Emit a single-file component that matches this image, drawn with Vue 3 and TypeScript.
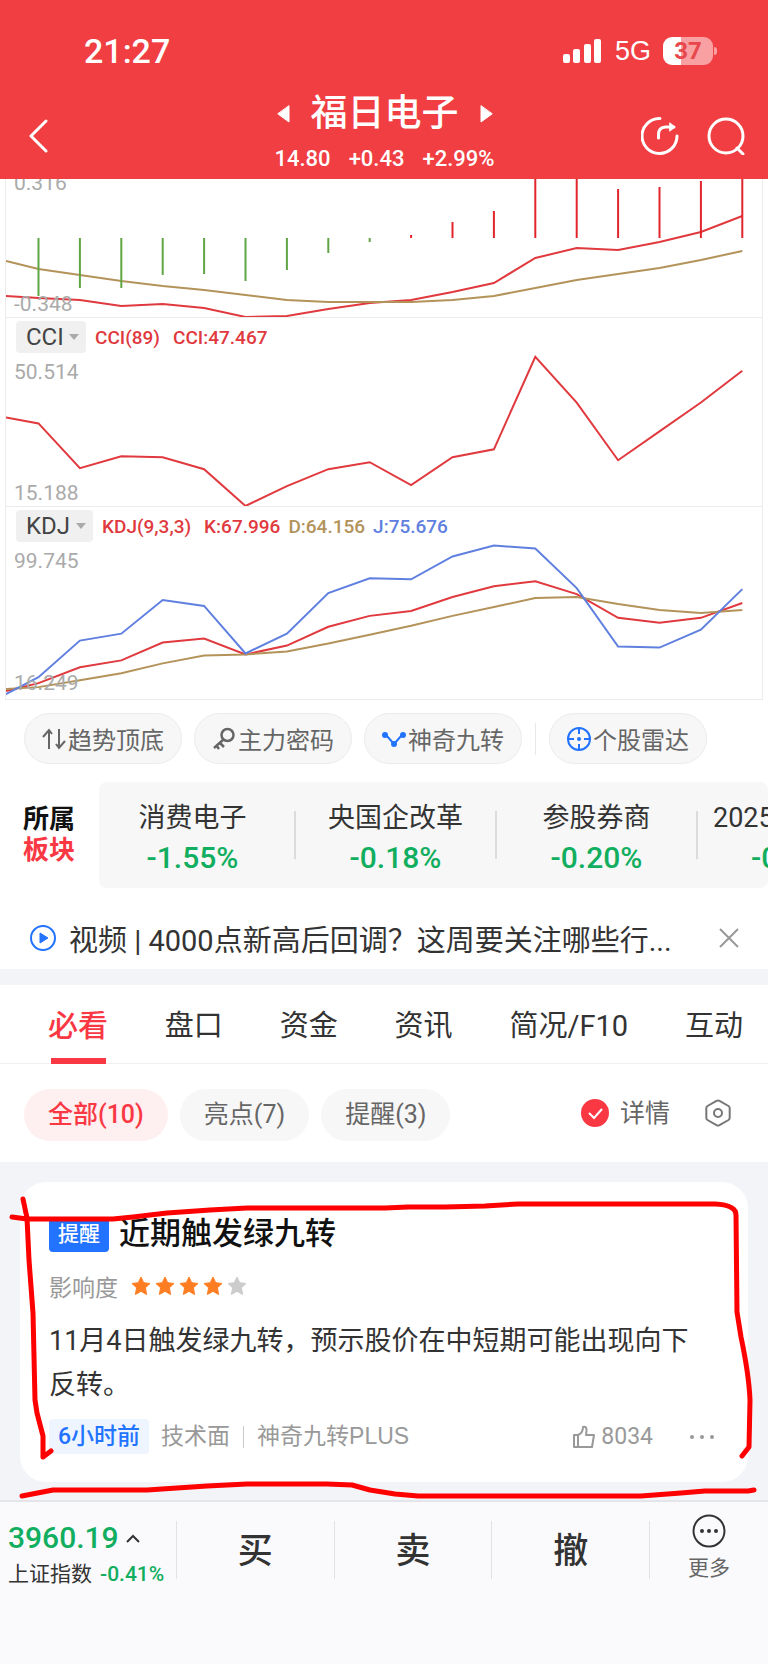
<script setup lang="ts">
import { ref } from 'vue'

type Series = { color: string; ys: number[] }
type Legend = { text: string; color: string }
type Panel = {
  id: string
  top: number
  height: number
  max: string
  min: string
  legends: Legend[]
  series: Series[]
}

const RED = '#e0393e'
const TAN = '#b3935a'
const BLUE = '#6080e0'

const panels: Panel[] = [
  {
    id: 'MACD', top: 179, height: 138, max: '0.316', min: '-0.348', legends: [],
    series: [
      { color: RED, ys: [296, 298, 300, 306, 304, 308, 317, 316, 309, 303, 300, 292, 283, 258, 248, 250, 242, 232, 216] },
      { color: TAN, ys: [261, 269, 275, 281, 286, 290, 295, 300, 302, 302, 302, 300, 296, 288, 280, 274, 268, 260, 251] },
    ],
  },
  {
    id: 'CCI', top: 317, height: 189, max: '50.514', min: '15.188',
    legends: [{ text: 'CCI(89)', color: RED }, { text: 'CCI:47.467', color: RED }],
    series: [
      { color: RED, ys: [417, 423, 468, 456, 457, 469, 506, 486, 469, 462, 485, 457, 449, 356, 402, 460, 431, 402, 370] },
    ],
  },
  {
    id: 'KDJ', top: 506, height: 194, max: '99.745', min: '16.249',
    legends: [
      { text: 'KDJ(9,3,3)', color: RED },
      { text: 'K:67.996', color: RED },
      { text: 'D:64.156', color: TAN },
      { text: 'J:75.676', color: BLUE },
    ],
    series: [
      { color: RED, ys: [692, 684, 668, 661, 643, 639, 655, 646, 627, 616, 611, 597, 586, 581, 594, 618, 623, 618, 603] },
      { color: TAN, ys: [690, 688, 681, 674, 664, 656, 655, 652, 644, 635, 626, 616, 607, 598, 597, 604, 610, 613, 610] },
      { color: BLUE, ys: [695, 678, 641, 634, 600, 606, 654, 634, 593, 578, 579, 556, 545, 548, 588, 647, 648, 630, 589] },
    ],
  },
]

const BASE = 238
const bars = [296, 288, 288, 275, 274, 281, 270, 253, 242, 235, 222, 211, 179, 179, 189, 187, 181, 179]

const xAt = (i: number): number => (i === 0 ? 0 : 32.5 + 41.4 * (i - 1))
const toPoints = (ys: number[]): string => ys.map((y, i) => `${xAt(i)},${y}`).join(' ')

const sectors = [
  { name: '消费电子', change: '-1.55%' },
  { name: '央国企改革', change: '-0.18%' },
  { name: '参股券商', change: '-0.20%' },
  { name: '2025', change: '-0' },
]

const tabs = ['必看', '盘口', '资金', '资讯', '简况/F10', '互动']
const activeTab = ref('必看')
const filters = ['全部(10)', '亮点(7)', '提醒(3)']
const activeFilter = ref('全部(10)')
const detail = ref(true)
</script>

<template>
  <div class="app">
    <header class="header">
      <div class="status">
        <span class="clock">21:27</span>
        <div class="status-right">
          <svg class="signal" viewBox="0 0 38 24" aria-hidden="true">
            <rect x="0" y="15" width="7" height="9" rx="2" />
            <rect x="10" y="10" width="7" height="14" rx="2" />
            <rect x="21" y="5" width="7" height="19" rx="2" />
            <rect x="31" y="0" width="7" height="24" rx="2" />
          </svg>
          <span class="net">5G</span>
          <span class="battery"><span class="battery-body">37</span><i class="nub"></i></span>
        </div>
      </div>
      <nav class="nav">
        <button class="icon-btn" aria-label="返回">
          <svg width="20" height="34" viewBox="0 0 20 34"><path d="M18 2 3 17l15 15" /></svg>
        </button>
        <div class="title-block">
          <div class="title-row">
            <button class="icon-btn" aria-label="上一只">
              <svg class="solid" width="14" height="18" viewBox="0 0 14 18"><path d="M12 1v16L1 9z" /></svg>
            </button>
            <h1>福日电子</h1>
            <button class="icon-btn" aria-label="下一只">
              <svg class="solid" width="14" height="18" viewBox="0 0 14 18"><path d="M2 1v16l11-8z" /></svg>
            </button>
          </div>
          <div class="quote"><span>14.80</span><span>+0.43</span><span>+2.99%</span></div>
        </div>
        <div class="nav-right">
          <button class="icon-btn" aria-label="分享">
            <svg width="38" height="38" viewBox="0 0 38 38">
              <path d="M19 1.500A17.500 17.500 0 1 0 36 19M17.500 21v-3.500q0-7 7-7.500H33" /><path d="m29 6 5 4-5 4z" fill="#fff" stroke-width="1" />
            </svg>
          </button>
          <button class="icon-btn" aria-label="搜索">
            <svg width="38" height="38" viewBox="0 0 38 38"><circle cx="19" cy="19" r="17" /><path d="m30 31 6 6" /></svg>
          </button>
        </div>
      </nav>
    </header>

    <main>
      <section class="charts">
        <div v-for="p in panels" :key="p.id" class="panel" :class="'panel-' + p.id.toLowerCase()">
          <svg class="plot" :viewBox="`0 ${p.top} 756 ${p.height}`" preserveAspectRatio="none" aria-hidden="true">
            <polyline v-for="(s, i) in p.series" :key="i" :points="toPoints(s.ys)" :stroke="s.color" />
            <template v-if="p.id === 'MACD'">
              <line
                v-for="(y, i) in bars" :key="'b' + i"
                :x1="xAt(i + 1)" :x2="xAt(i + 1)" :y1="BASE" :y2="y"
                :stroke="y > BASE ? '#5fa544' : '#e0252c'"
              />
            </template>
          </svg>
          <div class="overlay">
            <div v-if="p.legends.length" class="legend">
              <span class="picker">
                <select :aria-label="'指标 ' + p.id"><option>{{ p.id }}</option></select>
                <svg width="10" height="6" viewBox="0 0 10 6" aria-hidden="true"><path d="M0 0h10L5 6z" /></svg>
              </span>
              <span v-for="l in p.legends" :key="l.text" class="legend-item" :style="{ color: l.color }">{{ l.text }}</span>
            </div>
            <span class="scale">{{ p.max }}</span>
            <span class="scale low">{{ p.min }}</span>
          </div>
        </div>
      </section>

      <section class="tools">
        <button class="tool">
          <svg width="24" height="24" viewBox="0 0 24 24" fill="none" stroke="#666" stroke-width="2">
            <path d="M7 22V4M1 10l6-7 3 4M17 2v18M23 14l-6 7-3-4" />
          </svg>趋势顶底
        </button>
        <button class="tool">
          <svg width="24" height="24" viewBox="0 0 24 24" fill="none" stroke="#666" stroke-width="2.500">
            <circle cx="15.500" cy="8" r="6" /><path d="M11.500 12.500 2 21M8 16l4 4M4 18l3 4" />
          </svg>主力密码
        </button>
        <button class="tool">
          <svg width="24" height="24" viewBox="0 0 24 24" fill="#2273ff" stroke="#2273ff" stroke-width="2">
            <path d="m4 8 8 9 8-9" fill="none" /><circle cx="3" cy="8" r="2" /><circle cx="12" cy="17" r="2" /><circle cx="21" cy="8" r="2" />
          </svg>神奇九转
        </button>
        <i class="tool-sep"></i>
        <button class="tool">
          <svg width="24" height="24" viewBox="0 0 24 24" fill="none" stroke="#2273ff" stroke-width="2">
            <circle cx="12" cy="12" r="11" /><path d="M12 1v6M12 17v6M1 12h6M17 12h6" /><circle cx="12" cy="12" r="1" fill="#2273ff" />
          </svg>个股雷达
        </button>
      </section>

      <section class="sectors">
        <h2>所属<br /><em>板块</em></h2>
        <div class="sector-list">
          <a v-for="s in sectors" :key="s.name" href="#" class="sector">
            <span class="sector-name">{{ s.name }}</span>
            <span class="sector-change">{{ s.change }}</span>
          </a>
        </div>
      </section>

      <section class="video">
        <svg width="28" height="28" viewBox="0 0 28 28" aria-hidden="true">
          <circle cx="14" cy="14" r="12" fill="none" stroke="#2273ff" stroke-width="2" /><path d="M11 9v10l8-5z" fill="#2273ff" stroke="#2273ff" />
        </svg>
        <a href="#">视频 | 4000点新高后回调？这周要关注哪些行...</a>
        <button class="icon-btn" aria-label="关闭">
          <svg class="close" width="20" height="20" viewBox="0 0 20 20"><path d="m1 1 18 18M19 1 1 19" /></svg>
        </button>
      </section>

      <nav class="tabs">
        <button v-for="t in tabs" :key="t" class="tab" :class="{ active: t === activeTab }" @click="activeTab = t">{{ t }}</button>
      </nav>

      <section class="filters">
        <button
          v-for="f in filters" :key="f" class="filter" :class="{ active: f === activeFilter }"
          @click="activeFilter = f"
        >{{ f }}</button>
        <label class="detail">
          <span class="check">
            <input v-model="detail" type="checkbox" />
            <svg width="28" height="28" viewBox="0 0 28 28" aria-hidden="true"><path d="m8 14 5 5 8-9" /></svg>
          </span>
          详情
        </label>
        <button class="icon-btn" aria-label="设置">
          <svg class="gear" width="28" height="28" viewBox="0 0 28 28">
            <path d="M12.500 1.800q1.500-.8 3 0l9 5.200q1.200.8 1.200 2.200v9.600q0 1.400-1.200 2.200l-9 5.200q-1.500.8-3 0l-9-5.200q-1.200-.8-1.200-2.200V9.200q0-1.400 1.200-2.200z" /><circle cx="14" cy="14" r="4" />
          </svg>
        </button>
      </section>

      <section class="feed">
        <article class="card">
          <div class="card-title"><span class="badge">提醒</span><h3>近期触发绿九转</h3></div>
          <div class="impact">
            <span>影响度</span>
            <div class="stars">
              <svg v-for="n in 5" :key="n" :class="{ off: n === 5 }" width="20" height="20" viewBox="0 0 20 20" aria-hidden="true">
                <path d="m10 1 2.700 5.700 6.300.8-4.600 4.300 1.200 6.700L10 15.300l-5.600 3.200 1.200-6.700L1 7.500l6.300-.8z" />
              </svg>
            </div>
          </div>
          <p>11月4日触发绿九转，预示股价在中短期可能出现向下反转。</p>
          <footer class="meta">
            <span class="time">6小时前</span>
            <span>技术面</span>
            <i class="meta-sep"></i>
            <span class="source">神奇九转PLUS</span>
            <button class="like">
              <svg width="22" height="24" viewBox="0 0 22 24" aria-hidden="true">
                <path d="M1 10h4v12H1zM5 10q5-2 5-8 4-1 3.500 4l-.5 4h8l-2 12H5" />
              </svg>8034
            </button>
            <button class="icon-btn" aria-label="更多操作">
              <svg class="dots" width="26" height="6" viewBox="0 0 26 6"><circle cx="3" cy="3" r="2" /><circle cx="13" cy="3" r="2" /><circle cx="23" cy="3" r="2" /></svg>
            </button>
          </footer>
        </article>
        <svg class="marks" viewBox="0 1162 768 338" preserveAspectRatio="none" aria-hidden="true">
          <path d="M12 1217 27 1219H113L133 1217 167 1213 210 1210 247 1208H385L408 1207H445L485 1206 518 1204H715Q736 1205 736 1215L737 1312 741 1337Q749 1375 750 1400L749 1447 742 1456" />
          <path d="M23 1199 27 1218 29 1260 33 1313 35 1400 37 1413 43 1436V1457L51 1451" />
          <path d="M22 1496 53 1490H147L177 1488 207 1486 247 1484H327L352 1485 370 1490 395 1494 418 1496H641L681 1493 705 1491H748L754 1490" />
        </svg>
      </section>
    </main>

    <footer class="bottom">
      <button class="index">
        <span class="index-value">3960.19
          <svg width="14" height="9" viewBox="0 0 14 9" aria-hidden="true"><path d="m1 8 6-6 6 6" /></svg>
        </span>
        <span class="index-name">上证指数<b>-0.41%</b></span>
      </button>
      <button class="trade">买</button>
      <button class="trade">卖</button>
      <button class="trade">撤</button>
      <button class="more">
        <svg width="34" height="34" viewBox="0 0 34 34" aria-hidden="true">
          <circle cx="17" cy="17" r="15.500" fill="none" stroke="#333" stroke-width="2" />
          <circle cx="10" cy="17" r="2" fill="#333" /><circle cx="17" cy="17" r="2" fill="#333" /><circle cx="24" cy="17" r="2" fill="#333" />
        </svg>
        更多
      </button>
    </footer>
  </div>
</template>

<style>
body {
  margin: 0;
  background: #fafafc;
}
</style>

<style scoped>
.app,
.app * {
  box-sizing: border-box;
}
.app {
  font-family: Roboto, "Noto Sans CJK SC", sans-serif;
  color: #333;
  background: #fff;
  display: flex;
  flex-direction: column;
  min-height: 100vh;
  overflow: hidden;
}
button {
  font: inherit;
  color: inherit;
  background: none;
  border: 0;
  padding: 0;
  cursor: pointer;
}
a {
  color: inherit;
  text-decoration: none;
}
h1, h2, h3, p {
  margin: 0;
}
svg {
  display: block;
  flex: none;
}
.icon-btn {
  display: flex;
}

.header {
  background: #f03e42;
  color: #fff;
}
.status {
  height: 88px;
  padding: 14px 51px 0 84px;
  display: flex;
  align-items: center;
  justify-content: space-between;
}
.clock {
  font-size: 34px;
  font-weight: 500;
}
.status-right {
  display: flex;
  align-items: center;
}
.signal {
  width: 38px;
  height: 24px;
  fill: #fff;
}
.net {
  font-family: "Liberation Sans", sans-serif;
  font-size: 27px;
  margin: 0 12px 0 14px;
}
.battery {
  display: flex;
  align-items: center;
  gap: 1px;
}
.battery-body {
  width: 50px;
  line-height: 28px;
  border-radius: 9px;
  background: linear-gradient(90deg, #fff 37%, #f8a0a2 37%);
  color: #e8474b;
  font-size: 24px;
  font-weight: 700;
  text-align: center;
}
.nub {
  width: 3px;
  height: 8px;
  border-radius: 0 3px 3px 0;
  background: #f8a0a2;
}
.nav {
  height: 91px;
  padding: 4px 23px 0 28px;
  display: grid;
  grid-template-columns: 103px 1fr 107px;
  align-items: center;
}
.nav svg {
  fill: none;
  stroke: #fff;
  stroke-width: 3;
  stroke-linecap: round;
  stroke-linejoin: round;
}
.nav svg.solid {
  fill: #fff;
  stroke-width: 1;
}
.title-block {
  padding-bottom: 6px;
}
.title-row {
  display: flex;
  align-items: center;
  justify-content: center;
  gap: 20px;
}
h1 {
  font-size: 37px;
  line-height: 42px;
  font-weight: 500;
}
.quote {
  display: flex;
  justify-content: center;
  gap: 18px;
  margin-top: 10px;
  font-size: 22px;
  line-height: 28px;
  font-weight: 500;
}
.nav-right {
  display: flex;
  justify-content: flex-end;
  gap: 28px;
}

.charts {
  padding: 0 5px;
}
.panel {
  display: grid;
  border: 1px solid #ececec;
  border-top: 0;
  overflow: hidden;
}
.panel-macd {
  height: 139px;
}
.panel-cci {
  height: 189px;
}
.panel-kdj {
  height: 193px;
}
.plot,
.overlay {
  grid-area: 1 / 1;
  min-height: 0;
}
.plot {
  width: 100%;
  height: 100%;
  fill: none;
  stroke-width: 2;
  overflow: visible;
}
.overlay {
  display: flex;
  flex-direction: column;
  padding: 3px 0 0 8px;
}
.panel-macd .overlay {
  margin-top: -11px;
}
.legend {
  display: flex;
  align-items: center;
  height: 32px;
  margin: 0 0 7px 2px;
  font-size: 19px;
  font-weight: 500;
}
.picker {
  display: grid;
  align-items: center;
  background: #f0f0f0;
  border-radius: 4px;
  margin-right: 9px;
}
.picker select {
  grid-area: 1 / 1;
  appearance: none;
  border: 0;
  background: none;
  padding: 0 22px 0 10px;
  height: 32px;
  font-family: inherit;
  font-size: 24px;
  color: #444;
}
.picker svg {
  grid-area: 1 / 1;
  justify-self: end;
  margin-right: 7px;
  fill: #aaa;
  pointer-events: none;
}
.legend-item {
  margin-right: 8px;
}
.legend-item:nth-child(2) {
  margin-right: 13px;
}
.scale {
  font-size: 21px;
  line-height: 24px;
  color: #aaa;
}
.low {
  margin-top: auto;
}
.panel-macd .low,
.panel-cci .low {
  margin-bottom: 1px;
}
.panel-kdj .low {
  margin-bottom: 4px;
}

.tools {
  display: flex;
  align-items: center;
  gap: 12px;
  padding: 13px 24px 18px;
}
.tool {
  width: 158px;
  height: 51px;
  border: 1px solid #ebebeb;
  border-radius: 26px;
  background: #f7f7f7;
  display: flex;
  align-items: center;
  justify-content: center;
  gap: 2px;
  font-size: 24px;
  color: #666;
  white-space: nowrap;
}
.tool-sep {
  width: 1px;
  height: 32px;
  margin: 0 1px;
  background: #e8e8e8;
}

.sectors {
  display: flex;
  align-items: center;
}
h2 {
  flex: none;
  width: 99px;
  padding-left: 23px;
  font-size: 26px;
  line-height: 31px;
  font-weight: 700;
  color: #111;
}
h2 em {
  font-style: normal;
  color: #fa3844;
}
.sector-list {
  flex: 1;
  min-width: 0;
  height: 106px;
  display: flex;
  align-items: center;
  background: #f7f7f7;
  border-radius: 8px;
  overflow: hidden;
}
.sector {
  flex: none;
  width: 201px;
  height: 48px;
  padding-top: 8px;
  border-right: 2px solid #dcdcdc;
  display: flex;
  flex-direction: column;
  align-items: center;
  justify-content: center;
  white-space: nowrap;
}
.sector:first-child {
  width: 197px;
  padding-right: 8px;
}
.sector:last-child {
  align-items: flex-start;
  padding-left: 15px;
  border: 0;
}
.sector:last-child .sector-change {
  padding-left: 38px;
}
.sector-name {
  font-size: 27px;
  line-height: 38px;
}
.sector-change {
  font-size: 30px;
  line-height: 42px;
  font-weight: 500;
  color: #12ae60;
}

.video {
  height: 81px;
  padding: 18px 29px 0;
  display: flex;
  align-items: center;
  gap: 12px;
  font-size: 29px;
}
.video a {
  flex: 1;
  min-width: 0;
  white-space: nowrap;
}
.close {
  fill: none;
  stroke: #999;
  stroke-width: 2;
}

.tabs {
  height: 95px;
  border-top: 16px solid #f2f4f8;
  border-bottom: 1px solid #f0f0f0;
  padding: 0 25px 0 48px;
  display: flex;
  justify-content: space-between;
  font-size: 29px;
}
.tab {
  position: relative;
  padding-bottom: 2px;
}
.tab.active {
  font-size: 30px;
  color: #fa3844;
  font-weight: 500;
}
.tab.active::after {
  content: "";
  position: absolute;
  left: 3px;
  right: 2px;
  bottom: -1px;
  height: 6px;
  background: #fa3844;
}

.filters {
  height: 98px;
  padding: 4px 36px 0 24px;
  display: flex;
  align-items: center;
  gap: 12px;
  font-size: 25px;
  color: #666;
}
.filter {
  height: 52px;
  padding: 0 24px 6px;
  border-radius: 26px;
  background: #f7f7f7;
}
.filter.active {
  background: #feeff0;
  color: #fa3844;
  font-weight: 500;
}
.detail {
  margin: 0 22px 0 auto;
  padding-bottom: 8px;
  display: flex;
  align-items: center;
  gap: 11px;
}
.check {
  display: grid;
  padding-top: 4px;
}
.check input {
  grid-area: 1 / 1;
  appearance: none;
  margin: 0;
  width: 28px;
  height: 28px;
  border-radius: 50%;
  border: 2px solid #999;
}
.check input:checked {
  background: #fa3844;
  border: 0;
}
.check svg {
  grid-area: 1 / 1;
  fill: none;
  stroke: #fff;
  stroke-width: 2;
  pointer-events: none;
}
.filters .icon-btn {
  padding-bottom: 4px;
}
.gear {
  fill: none;
  stroke: #777;
  stroke-width: 2;
}

.feed {
  position: relative;
  background: #f2f4f8;
  padding: 20px 20px 18px;
}
.marks {
  position: absolute;
  inset: 0;
  width: 100%;
  height: 100%;
  fill: none;
  stroke: #f00;
  stroke-width: 5;
  stroke-linecap: round;
  stroke-linejoin: round;
  pointer-events: none;
}
.card {
  background: #fff;
  border-radius: 26px;
  padding: 32px 33px 28px 29px;
}
.card-title {
  display: flex;
  align-items: center;
  gap: 10px;
  height: 40px;
}
.badge {
  padding: 0 9px;
  border-radius: 4px;
  background: #2273ff;
  color: #fff;
  font-size: 21px;
  line-height: 35px;
  font-weight: 500;
}
h3 {
  font-size: 31px;
  line-height: 40px;
  font-weight: 500;
  color: #111;
}
.impact {
  display: flex;
  align-items: center;
  gap: 13px;
  height: 32px;
  margin-top: 16px;
  font-size: 23px;
  color: #999;
}
.stars {
  display: flex;
  gap: 4px;
  fill: #ff7d22;
  stroke: #ff7d22;
  stroke-linejoin: round;
}
.stars .off {
  fill: #ccc;
  stroke: #ccc;
}
p {
  margin-top: 17px;
  font-size: 27px;
  line-height: 44px;
}
.meta {
  display: flex;
  align-items: center;
  height: 35px;
  margin-top: 12px;
  font-size: 23px;
  line-height: 35px;
  color: #999;
}
.time {
  padding: 0 9px;
  margin-right: 12px;
  border-radius: 4px;
  background: #eff5ff;
  color: #2273ff;
  font-weight: 500;
}
.meta-sep {
  width: 1px;
  height: 22px;
  margin: 0 13px;
  background: #ccc;
}
.source {
  font-family: "Liberation Sans", "Noto Sans CJK SC", sans-serif;
}
.like {
  display: flex;
  align-items: center;
  gap: 6px;
  margin: 0 36px 0 auto;
}
.like svg {
  fill: none;
  stroke: #999;
  stroke-width: 2;
  stroke-linejoin: round;
}
.dots {
  fill: #999;
}

.bottom {
  flex: 1;
  display: grid;
  grid-template-columns: 177px 1fr 1fr 1fr 118px;
  align-items: start;
  padding-top: 19px;
  background: #fafafc;
  border-top: 2px solid #e4e5ea;
}
.bottom button {
  height: 58px;
  border-right: 1px solid #e2e2e6;
}
.bottom button.more {
  border: 0;
  display: flex;
  flex-direction: column;
  align-items: center;
  justify-content: center;
  gap: 6px;
  padding-bottom: 4px;
  font-size: 21px;
  line-height: 28px;
  color: #666;
}
.index {
  display: flex;
  flex-direction: column;
  align-items: flex-start;
  justify-content: center;
  padding: 10px 0 0 8px;
  white-space: nowrap;
}
.index-value {
  display: flex;
  align-items: center;
  gap: 7px;
  font-size: 30px;
  line-height: 38px;
  font-weight: 500;
  color: #12ae60;
}
.index-value svg {
  fill: none;
  stroke: #333;
  stroke-width: 2;
}
.index-name {
  font-size: 21px;
  line-height: 34px;
}
.index-name b {
  margin-left: 8px;
  font-weight: 500;
  color: #12ae60;
}
.bottom button.trade {
  padding-top: 4px;
  font-size: 35px;
  line-height: 52px;
  font-weight: 500;
}
</style>
